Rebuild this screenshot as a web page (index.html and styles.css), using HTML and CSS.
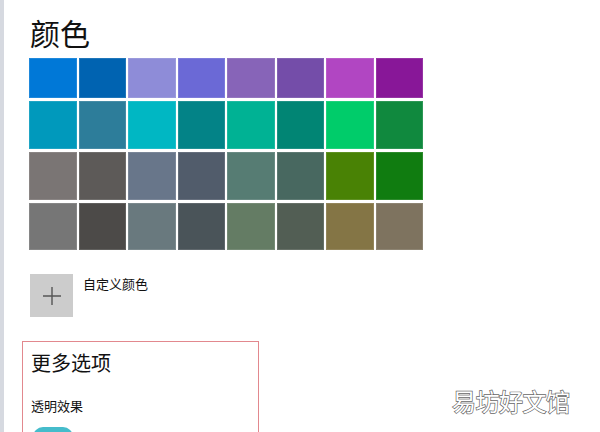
FILE: index.html
```html
<!DOCTYPE html>
<html lang="zh-CN">
<head>
<meta charset="utf-8">
<link rel="stylesheet" href="styles.css">
</head>
<body>
<div class="app">
  <div class="strip"></div>
  <main class="main">
    <h1 class="title">颜色</h1>
    <div class="swatches">
      <div class="sw" style="background:#0078d7"></div>
      <div class="sw" style="background:#0063b1"></div>
      <div class="sw" style="background:#8e8cd8"></div>
      <div class="sw" style="background:#6b69d6"></div>
      <div class="sw" style="background:#8764b8"></div>
      <div class="sw" style="background:#744da9"></div>
      <div class="sw" style="background:#b146c2"></div>
      <div class="sw" style="background:#881798"></div>
      <div class="sw" style="background:#0099bc"></div>
      <div class="sw" style="background:#2d7d9a"></div>
      <div class="sw" style="background:#00b7c3"></div>
      <div class="sw" style="background:#038387"></div>
      <div class="sw" style="background:#00b294"></div>
      <div class="sw" style="background:#018574"></div>
      <div class="sw" style="background:#00cc6a"></div>
      <div class="sw" style="background:#10893e"></div>
      <div class="sw" style="background:#7a7574"></div>
      <div class="sw" style="background:#5d5a58"></div>
      <div class="sw" style="background:#68768a"></div>
      <div class="sw" style="background:#515c6b"></div>
      <div class="sw" style="background:#567c73"></div>
      <div class="sw" style="background:#486860"></div>
      <div class="sw" style="background:#498205"></div>
      <div class="sw" style="background:#107c10"></div>
      <div class="sw" style="background:#767676"></div>
      <div class="sw" style="background:#4c4a48"></div>
      <div class="sw" style="background:#69797e"></div>
      <div class="sw" style="background:#4a5459"></div>
      <div class="sw" style="background:#647c64"></div>
      <div class="sw" style="background:#525e54"></div>
      <div class="sw" style="background:#847545"></div>
      <div class="sw" style="background:#7e735f"></div>
    </div>
    <div class="custom">
      <div class="plus-btn">
        <svg width="20" height="20" viewBox="0 0 20 20"><path d="M10 1V19M1 10H19" stroke="#555" stroke-width="1.4" fill="none"/></svg>
      </div>
      <span class="custom-label">自定义颜色</span>
    </div>
    <section class="more">
      <h2 class="more-title">更多选项</h2>
      <div class="more-label">透明效果</div>
      <div class="toggle"></div>
    </section>
  </main>
  <div class="watermark">易坊好文馆</div>
</div>
</body>
</html>
```

FILE: styles.css
```css
html, body {
  margin: 0;
  padding: 0;
  background: #ffffff;
  height: 100%;
  overflow: hidden;
}
body {
  font-family: "Noto Sans CJK SC", "Noto Sans", sans-serif;
  color: #000;
}
.app {
  display: flex;
  height: 432px;
  position: relative;
  overflow: hidden;
}
.strip {
  width: 4px;
  flex: none;
  background: #d6d9e0;
}
.main {
  flex: 1;
  padding-left: 18px;
}
.title {
  margin: 14px 0 0 8px;
  font-size: 30px;
  font-weight: 400;
  line-height: 36px;
  color: #111;
}
.swatches {
  margin: 8px 0 0 7px;
  display: grid;
  grid-template-columns: repeat(8, 47.5px);
  grid-template-rows: 40px 48px 47.5px 47.5px;
  column-gap: 2px;
  row-gap: 3px;
}
.sw {
  box-shadow: inset 0 0 0 1px rgba(255,255,255,0.12);
}
.custom {
  display: flex;
  align-items: flex-start;
  gap: 10px;
  margin: 24px 0 0 8px;
}
.plus-btn {
  width: 43px;
  height: 43px;
  background: #cccccc;
  display: flex;
  align-items: center;
  justify-content: center;
}
.custom-label {
  font-size: 13px;
  line-height: 18px;
  margin-top: 1px;
  color: #111;
}
.more {
  margin-top: 24px;
  width: 237px;
  height: 91px;
  border: 1.5px solid #e2888e;
  border-bottom: 0;
  box-sizing: border-box;
  padding: 7px 0 0 8px;
  overflow: hidden;
}
.more-title {
  margin: 0;
  font-size: 20px;
  font-weight: 400;
  line-height: 28px;
  color: #111;
}
.more-label {
  margin-top: 20px;
  font-size: 13px;
  line-height: 18px;
  color: #111;
}
.toggle {
  margin: 12px 0 0 2px;
  width: 40px;
  height: 20px;
  border-radius: 10px;
  background: #45bccb;
}
.watermark {
  position: absolute;
  left: 452px;
  top: 386px;
  font-size: 24px;
  line-height: 30px;
  color: #ffffff;
  -webkit-text-stroke: 1.4px #666666;
  paint-order: stroke fill;
  letter-spacing: -0.5px;
}
```
